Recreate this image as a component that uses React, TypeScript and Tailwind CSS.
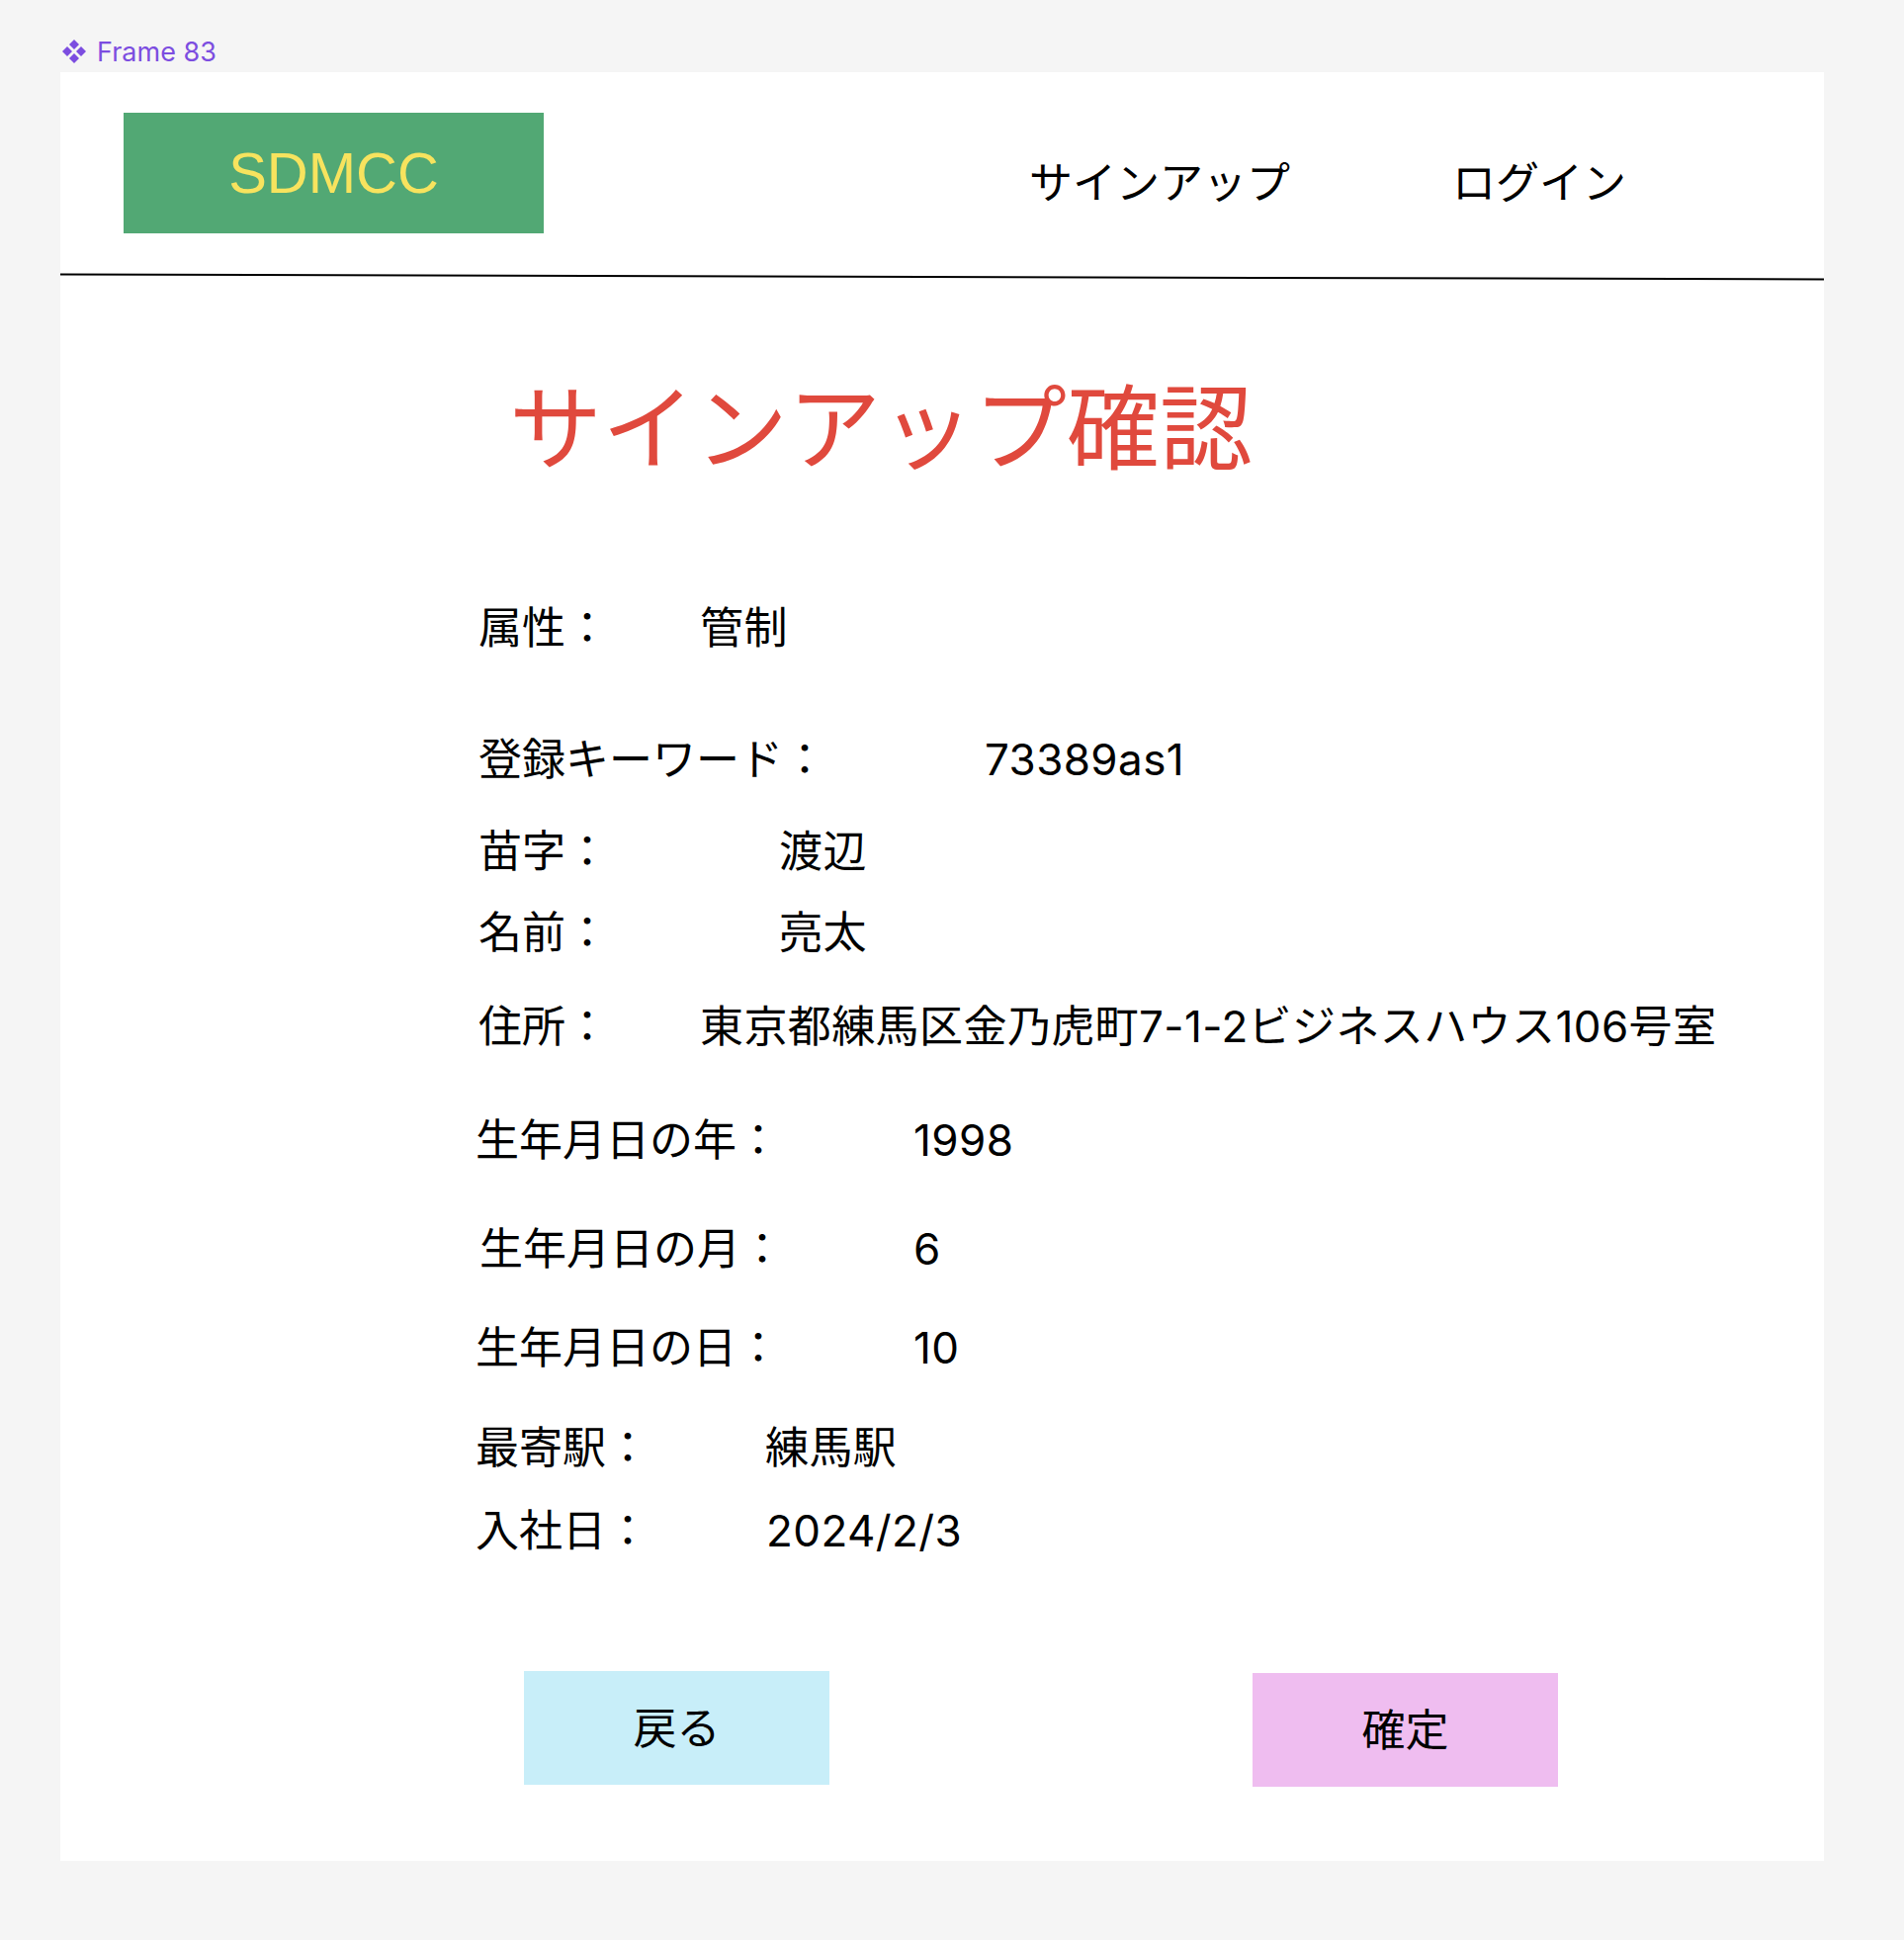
export default function App() {
  const rows: { label: string; value: string; w: string; top: string; shift?: string }[] = [
    { label: "属性：", value: "管制", w: "w-[224px]", top: "mt-0" },
    { label: "登録キーワード：", value: "73389as1", w: "w-[512px]", top: "mt-[77px]" },
    { label: "苗字：", value: "渡辺", w: "w-[304px]", top: "mt-[37px]" },
    { label: "名前：", value: "亮太", w: "w-[304px]", top: "mt-[26px]" },
    { label: "住所：", value: "東京都練馬区金乃虎町7-1-2ビジネスハウス106号室", w: "w-[224px]", top: "mt-[39px]" },
    { label: "生年月日の年：", value: "1998", w: "w-[443px]", top: "mt-[59px]", shift: "-ml-[3px]" },
    { label: "生年月日の月：", value: "6", w: "w-[439px]", top: "mt-[54px]", shift: "ml-[1px]" },
    { label: "生年月日の日：", value: "10", w: "w-[443px]", top: "mt-[44px]", shift: "-ml-[3px]" },
    { label: "最寄駅：", value: "練馬駅", w: "w-[293px]", top: "mt-[45px]", shift: "-ml-[3px]" },
    { label: "入社日：", value: "2024/2/3", w: "w-[294px]", top: "mt-[28px]", shift: "-ml-[3px]" },
  ]

  return (
    <div className="min-h-[1962px] bg-[#f5f5f5] font-['Inter','Noto_Sans_CJK_JP',sans-serif] text-black">
      {/* Frame label */}
      <div className="h-[73px] pt-[37px] pl-[62px]">
        <div className="flex h-[30px] items-center gap-[10px]">
          <svg width="26" height="26" viewBox="0 0 26 26" className="shrink-0">
            <g fill="#7c4de0">
              <path d="M13 1 L18 6 L13 11 L8 6 Z" />
              <path d="M6 8 L11 13 L6 18 L1 13 Z" />
              <path d="M20 8 L25 13 L20 18 L15 13 Z" />
              <path d="M13 15 L18 20 L13 25 L8 20 Z" />
            </g>
          </svg>
          <span className="text-[27px] leading-none text-[#7c4de0]">Frame 83</span>
        </div>
      </div>

      {/* Frame */}
      <div className="ml-[61px] h-[1809px] w-[1784px] bg-white">
        {/* Header */}
        <div className="flex h-[206px] items-start pl-[64px] pt-[41px]">
          <div className="flex h-[122px] w-[425px] items-center justify-center bg-[#52a874]">
            <span className="font-['Liberation_Sans',sans-serif] text-[58px] leading-none text-[#f7e35e]">SDMCC</span>
          </div>
          <nav className="ml-[491px] mt-[43px] flex gap-[164px] text-[44px] leading-[56px]">
            <span>サインアップ</span>
            <span>ログイン</span>
          </nav>
        </div>
        <div className="h-[2px] w-full rotate-[0.16deg] bg-black" />

        {/* Title */}
        <h1 className="mt-[106px] pl-[454px] text-[94px] font-normal leading-none text-[#e0493d]">
          サインアップ確認
        </h1>

        {/* Details */}
        <div className="mt-[126px] flex flex-col pl-[423px] text-[44px] leading-[56px]">
          {rows.map((r) => (
            <div key={r.label} className={`flex ${r.top} ${r.shift ?? ""}`}>
              <span className={`${r.w} shrink-0`}>{r.label}</span>
              <span className="whitespace-nowrap tracking-[0.4px]">{r.value}</span>
            </div>
          ))}
        </div>

        {/* Buttons */}
        <div className="mt-[114px] flex items-start gap-[428px] pl-[469px]">
          <button className="flex h-[115px] w-[309px] items-center justify-center bg-[#c8eef9] text-[44px]">
            戻る
          </button>
          <button className="mt-[2px] flex h-[115px] w-[309px] items-center justify-center bg-[#efbdf0] text-[44px]">
            確定
          </button>
        </div>
      </div>
    </div>
  )
}
